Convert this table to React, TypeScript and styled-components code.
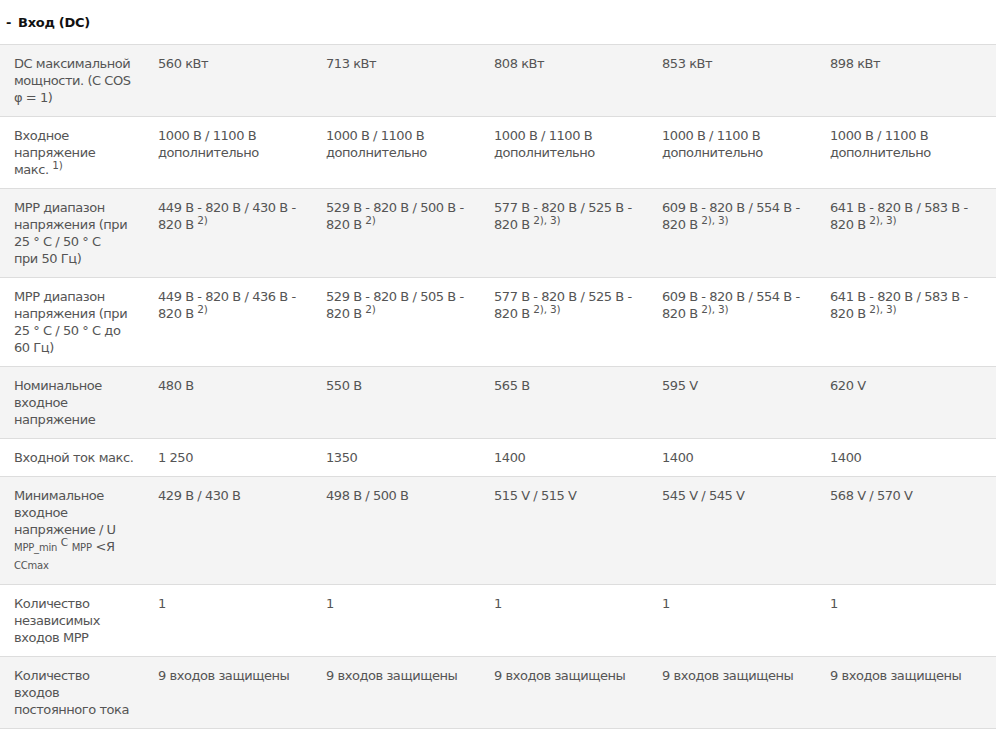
import React from "react";
import styled, { createGlobalStyle } from "styled-components";

const GlobalStyle = createGlobalStyle`
  html, body {
    margin: 0;
    padding: 0;
    background: #fff;
  }
  body {
    font-family: "DejaVu Sans", Verdana, sans-serif;
    font-size: 13px;
    color: #555;
  }
`;

const Section = styled.section`
  width: 996px;
`;

const Header = styled.div`
  height: 44px;
  display: flex;
  align-items: center;
  gap: 7px;
  padding-left: 6px;
  font-weight: bold;
  font-size: 13px;
  letter-spacing: -0.3px;
  color: #111;
  border-bottom: 1px solid #ddd;
`;

const Table = styled.div`
  display: grid;
  grid-template-columns: 144px repeat(4, 168px) 1fr;
`;

const Cell = styled.div<{ $alt: boolean; $label?: boolean }>`
  background: ${(p) => (p.$alt ? "#f4f4f4" : "#fff")};
  border-bottom: 1px solid #ddd;
  padding: 10px ${(p) => (p.$label ? "11px" : "10px")} 10px 14px;
  line-height: 17px;
  font-size: 13px;
  letter-spacing: -0.45px;
  color: #555;
`;

const NoWrap = styled.span`
  white-space: nowrap;
`;

const Sup = styled.sup`
  font-size: 10.5px;
  line-height: 0;
  vertical-align: 5px;
  letter-spacing: -0.2px;
`;

const Small = styled.span`
  font-size: 10px;
  letter-spacing: -0.2px;
`;

type Row = { label: React.ReactNode; values: React.ReactNode[] };

const fn = (t: string) => <Sup>{t}</Sup>;

const rows: Row[] = [
  {
    label: "DC максимальной мощности. (C COS φ = 1)",
    values: ["560 кВт", "713 кВт", "808 кВт", "853 кВт", "898 кВт"],
  },
  {
    label: <>Входное напряжение макс. {fn("1)")}</>,
    values: Array(5).fill("1000 В / 1100 В дополнительно"),
  },
  {
    label: (
      <>
        MPP диапазон напряжения (при 25 ° C / 50 ° C <NoWrap>при 50 Гц)</NoWrap>
      </>
    ),
    values: [
      <>449 В - 820 В / 430 В - 820 В {fn("2)")}</>,
      <>529 В - 820 В / 500 В - 820 В {fn("2)")}</>,
      <>577 В - 820 В / 525 В - 820 В {fn("2), 3)")}</>,
      <>609 В - 820 В / 554 В - 820 В {fn("2), 3)")}</>,
      <>641 В - 820 В / 583 В - 820 В {fn("2), 3)")}</>,
    ],
  },
  {
    label: "MPP диапазон напряжения (при 25 ° C / 50 ° C до 60 Гц)",
    values: [
      <>449 В - 820 В / 436 В - 820 В {fn("2)")}</>,
      <>529 В - 820 В / 505 В - 820 В {fn("2)")}</>,
      <>577 В - 820 В / 525 В - 820 В {fn("2), 3)")}</>,
      <>609 В - 820 В / 554 В - 820 В {fn("2), 3)")}</>,
      <>641 В - 820 В / 583 В - 820 В {fn("2), 3)")}</>,
    ],
  },
  {
    label: "Номинальное входное напряжение",
    values: ["480 В", "550 В", "565 В", "595 V", "620 V"],
  },
  {
    label: <NoWrap>Входной ток макс.</NoWrap>,
    values: ["1 250", "1350", "1400", "1400", "1400"],
  },
  {
    label: (
      <>
        Минимальное входное напряжение / U <Small>MPP_min</Small> {fn("C")}{" "}
        <Small>MPP</Small> {"<Я"} <Small>CCmax</Small>
      </>
    ),
    values: ["429 В / 430 В", "498 В / 500 В", "515 V / 515 V", "545 V / 545 V", "568 V / 570 V"],
  },
  {
    label: "Количество независимых входов MPP",
    values: ["1", "1", "1", "1", "1"],
  },
  {
    label: "Количество входов постоянного тока",
    values: Array(5).fill("9 входов защищены"),
  },
];

export default function App() {
  return (
    <>
      <GlobalStyle />
      <Section>
        <Header>
          <span>-</span>
          <span>Вход (DC)</span>
        </Header>
        <Table>
          {rows.map((row, i) => {
            const alt = i % 2 === 0;
            return (
              <React.Fragment key={i}>
                <Cell $alt={alt} $label>
                  {row.label}
                </Cell>
                {row.values.map((v, j) => (
                  <Cell key={j} $alt={alt}>
                    {v}
                  </Cell>
                ))}
              </React.Fragment>
            );
          })}
        </Table>
      </Section>
    </>
  );
}
